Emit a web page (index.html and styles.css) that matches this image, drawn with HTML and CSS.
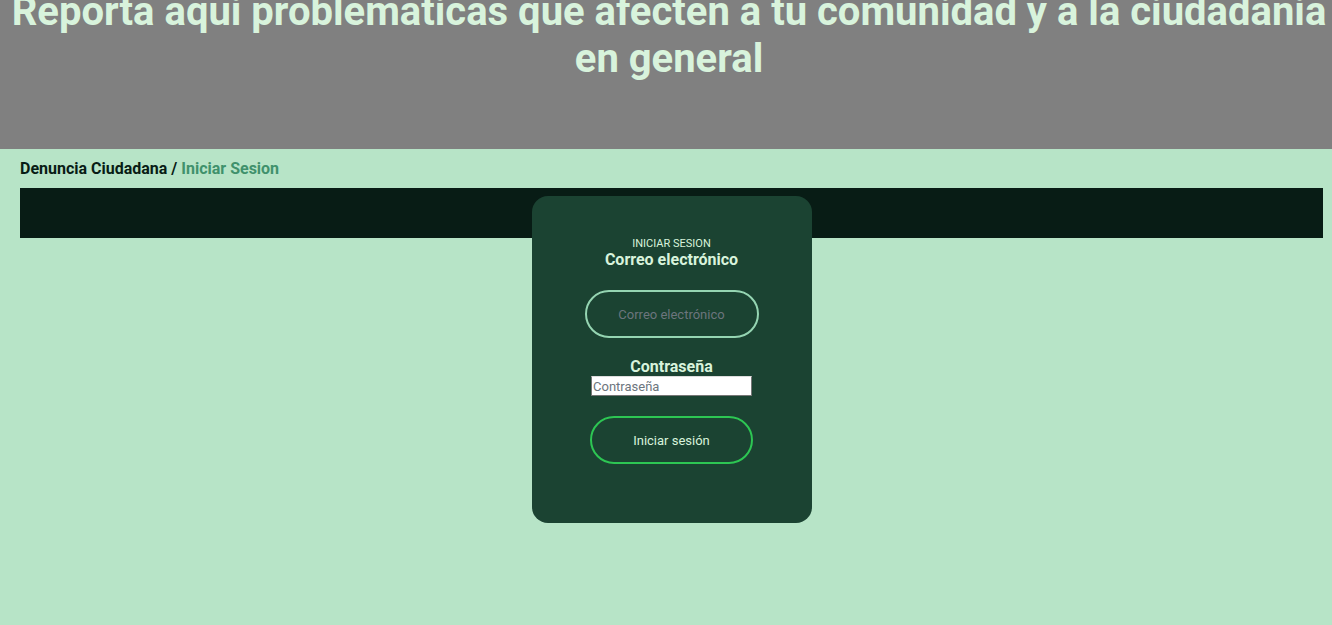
FILE: index.html
```html
<!DOCTYPE html>
<html lang="es">
<head>
<meta charset="utf-8">
<title>Denuncia Ciudadana - Iniciar Sesion</title>
<link rel="stylesheet" href="styles.css">
</head>
<body>
<header class="hero">
  <h1 class="hero-title">Reporta aqui problematicas que afecten a tu comunidad y a la ciudadania en general</h1>
</header>
<nav class="crumbs">
  <span class="crumb-root">Denuncia Ciudadana /</span>
  <a class="crumb-current" href="#">Iniciar Sesion</a>
</nav>
<section class="band">
  <form class="card">
    <p class="card-kicker">INICIAR SESION</p>
    <label class="card-label" for="email">Correo electrónico</label>
    <input class="pill-input" id="email" type="email" placeholder="Correo electrónico">
    <label class="card-label card-label-pass" for="pass">Contraseña</label>
    <input class="plain-input" id="pass" type="password" placeholder="Contraseña">
    <button class="pill-button" type="button">Iniciar sesión</button>
  </form>
</section>
</body>
</html>
```

FILE: styles.css
```css
* { box-sizing: border-box; }

html, body {
  margin: 0;
  padding: 0;
}

body {
  background: #b7e4c7;
  font-family: Roboto, "Liberation Sans", Arial, sans-serif;
  min-height: 625px;
  overflow: hidden;
}

.hero {
  background: #808080;
  height: 149px;
  overflow: hidden;
}

.hero-title {
  margin: -12px 0 0;
  font-size: 40px;
  font-weight: 700;
  color: #d8f3dc;
  text-align: center;
  line-height: 47px;
  padding-left: 6px;
}

.crumbs {
  padding: 10px 20px;
  font-size: 16px;
  font-weight: 700;
  line-height: 19px;
  color: #081c15;
}

.crumb-current {
  color: #40916c;
  text-decoration: none;
}

.band {
  margin: 0 9px 0 20px;
  height: 50px;
  background: #081c15;
  padding-top: 8px;
  display: flex;
  justify-content: center;
}

.card {
  width: 280px;
  height: 327px;
  flex: none;
  background: #1b4332;
  border-radius: 16px;
  padding-top: 41px;
  display: flex;
  flex-direction: column;
  align-items: center;
}

.card-kicker {
  margin: 0;
  font-size: 11px;
  line-height: 13px;
  color: #d8f3dc;
}

.card-label {
  font-size: 16px;
  font-weight: 700;
  line-height: 19px;
  color: #d8f3dc;
}

.card-label-pass {
  margin-top: 19px;
}

.pill-input {
  margin-top: 21px;
  width: 174px;
  height: 48px;
  border: 2px solid #95d5b2;
  border-radius: 24px;
  background: transparent;
  color: #d8f3dc;
  font-family: Roboto, "Liberation Sans", Arial, sans-serif;
  font-size: 13px;
  text-align: center;
  outline: none;
}

.pill-input::placeholder {
  color: #6c757d;
}

.plain-input {
  width: 161px;
  height: 20px;
  padding: 0 1px;
  border: 1px solid #767676;
  border-top-color: #ddd;
  background: #fff;
  font-family: Roboto, "Liberation Sans", Arial, sans-serif;
  font-size: 13px;
  color: #000;
}

.plain-input::placeholder {
  color: #6c757d;
}

.pill-button {
  margin-top: 20px;
  width: 163px;
  height: 48px;
  border: 2px solid #2dc653;
  border-radius: 24px;
  background: transparent;
  color: #d8f3dc;
  font-family: Roboto, "Liberation Sans", Arial, sans-serif;
  font-size: 13px;
  cursor: pointer;
}
```
